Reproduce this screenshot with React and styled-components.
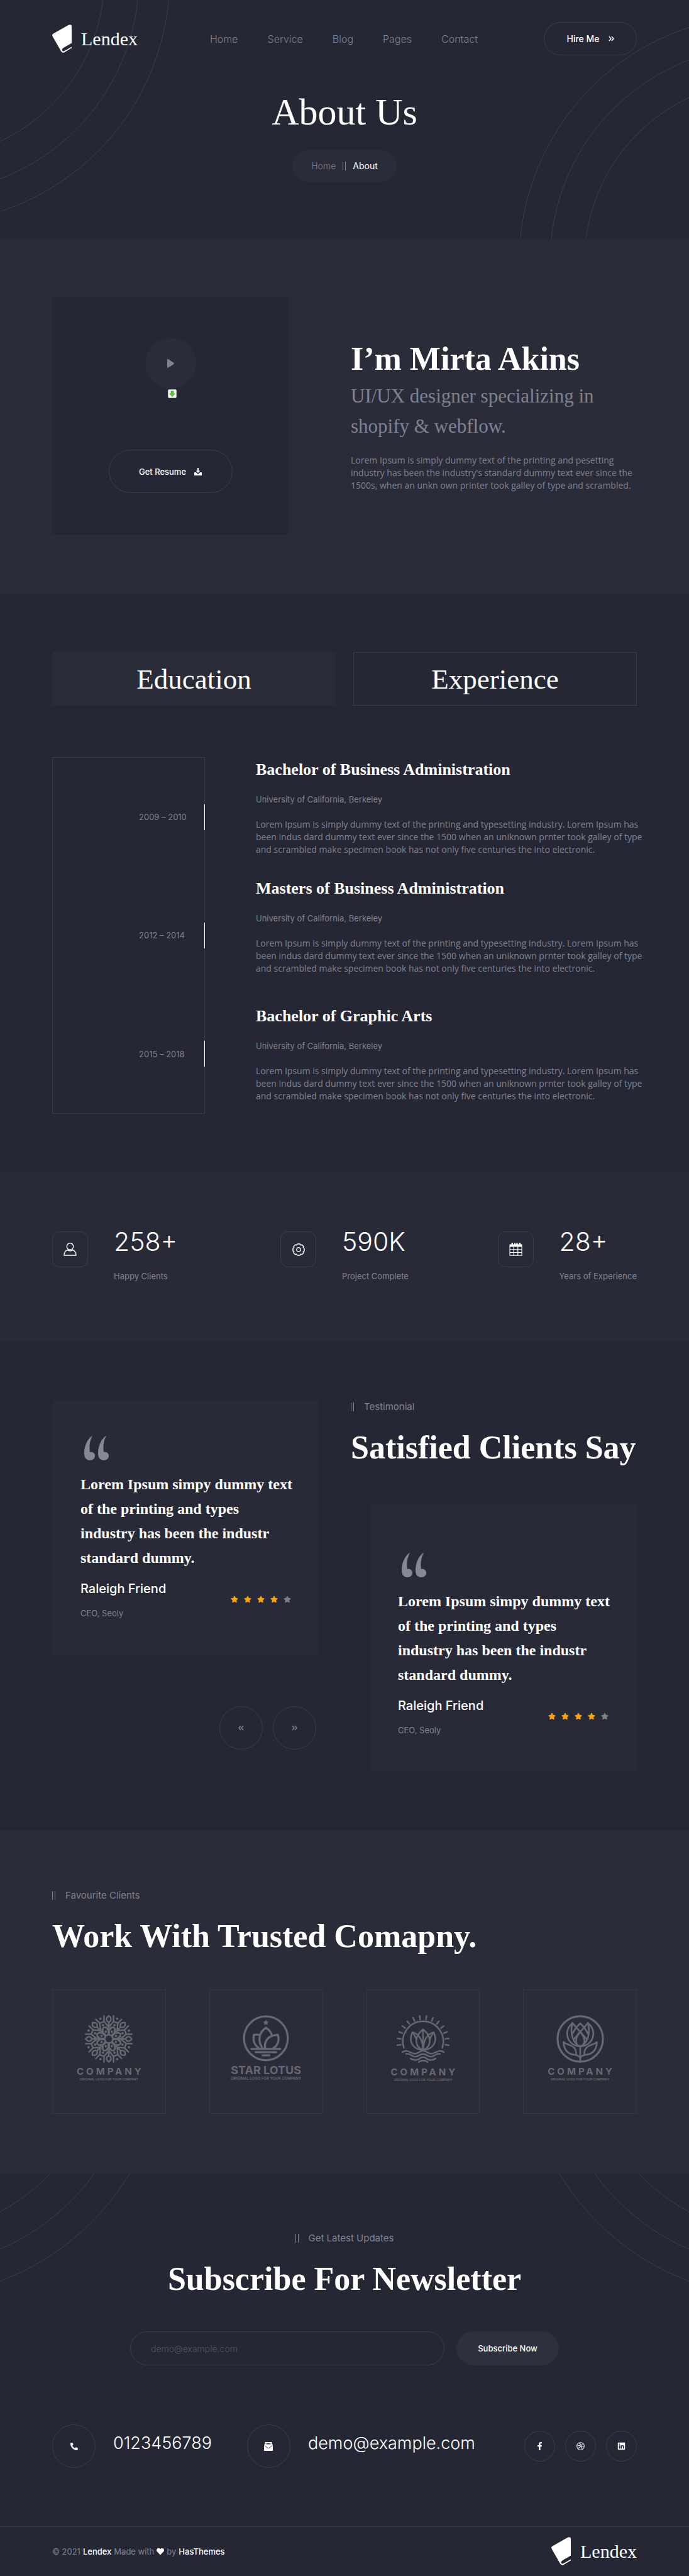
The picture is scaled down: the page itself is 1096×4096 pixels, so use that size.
import React from "react";
import styled, { createGlobalStyle, ThemeProvider } from "styled-components";
import { FaDribbble, FaFacebookF, FaHeart, FaLinkedin, FaPhoneAlt, FaStar } from "react-icons/fa";

const theme = {
  dark: "#252734",
  light: "#2a2c39",
  card: "#282a37",
  raised: "#2e303d",
  line: "#3a3c49",
  faint: "#343643",
  muted: "#808290",
  white: "#ffffff",
  serif: '"Liberation Serif", "Times New Roman", serif',
  sans: 'Inter, "Open Sans", sans-serif',
  copy: '"Open Sans", Inter, sans-serif',
};

const GlobalStyle = createGlobalStyle`
  *, *::before, *::after { box-sizing: border-box; }
  body { margin: 0; background: #252734; }
  h1, h2, h3, p, ol, ul, blockquote { margin: 0; padding: 0; font-weight: 400; }
  ol, ul { list-style: none; }
  a { color: inherit; text-decoration: none; }
  button, input { font: inherit; color: inherit; }
  svg { display: block; }
`;

const Page = styled.div`
  font-family: ${(p) => p.theme.sans};
  font-size: 13px;
  line-height: 20px;
  font-weight: 300;
  color: ${(p) => p.theme.muted};
  background: ${(p) => p.theme.dark};
  overflow: hidden;
`;

const Section = styled.section`
  position: relative;
  padding: ${(p) => p.$pad || "94px 83px"};
  background: ${(p) => p.theme[p.$tone || "dark"]};
`;

const Arcs = styled.svg`
  position: absolute;
  top: 0;
  ${(p) => (p.$right ? "right: 0;" : "left: 0;")}
  width: 280px;
  height: 380px;
  fill: none;
  stroke: ${(p) => p.theme.line};
  pointer-events: none;
`;

/* Header */

const TopBar = styled.div`
  position: relative;
  display: flex;
  align-items: center;
  justify-content: space-between;
  height: 53px;
`;

const Brand = styled.a`
  display: flex;
  align-items: center;
  gap: 15px;
  color: ${(p) => p.theme.white};
  font-family: ${(p) => p.theme.serif};
  font-size: 30px;
  line-height: 45px;
  font-weight: 400;
`;

const Nav = styled.nav`
  display: flex;
  gap: 47px;
  margin-right: -10px;
  font-size: 16px;
`;

const PillButton = styled.button`
  display: flex;
  align-items: center;
  justify-content: center;
  gap: ${(p) => p.$gap || "0"};
  width: ${(p) => p.$width};
  height: ${(p) => p.$height || "53px"};
  padding: 0;
  border: 1px solid ${(p) => (p.$filled ? p.theme.raised : p.theme.line)};
  border-radius: 35px;
  background: ${(p) => (p.$filled ? p.theme.raised : "transparent")};
  color: ${(p) => p.theme.white};
  font-size: ${(p) => p.$size || "13px"};
  font-weight: 500;
  cursor: pointer;
`;

const PageTitle = styled.h1`
  position: relative;
  margin-top: 54px;
  text-align: center;
  color: ${(p) => p.theme.white};
  font-family: ${(p) => p.theme.serif};
  font-size: 60px;
  line-height: 72px;
`;

const Crumbs = styled.nav`
  position: relative;
  display: flex;
  align-items: center;
  justify-content: center;
  gap: 11px;
  width: 166px;
  height: 52px;
  margin: 24px auto 0;
  border-radius: 26px;
  background: ${(p) => p.theme.light};
  font-size: 14px;

  [aria-current] {
    color: ${(p) => p.theme.white};
    font-weight: 400;
  }
`;

const Bars = styled.span`
  display: block;
  width: 5px;
  height: 14px;
  border: solid ${(p) => p.theme.muted};
  border-width: 0 1px;
`;

/* Shared headings */

const Kicker = styled.p`
  display: flex;
  align-items: center;
  justify-content: ${(p) => (p.$center ? "center" : "flex-start")};
  gap: 16px;
  font-size: 15px;
`;

const Heading = styled.h2`
  margin-top: ${(p) => (p.$flush ? "0" : "22px")};
  text-align: ${(p) => (p.$center ? "center" : "left")};
  white-space: nowrap;
  color: ${(p) => p.theme.white};
  font-family: ${(p) => p.theme.serif};
  font-size: 52px;
  line-height: 66px;
  font-weight: 700;
`;

/* About */

const AboutGrid = styled.div`
  display: grid;
  grid-template-columns: minmax(0, 376fr) minmax(0, 455fr);
  gap: 99px;
  align-items: center;
`;

const VideoCard = styled.div`
  display: flex;
  flex-direction: column;
  align-items: center;
  padding: 64px 0 66px;
  background: ${(p) => p.theme.dark};
`;

const PlayButton = styled.button`
  display: flex;
  align-items: center;
  justify-content: center;
  width: 81px;
  height: 81px;
  padding: 0;
  border: 0;
  border-radius: 50%;
  background: ${(p) => p.theme.light};
`;

const Badge = styled.div`
  margin: 1px 0 82px 5px;
`;

const Intro = styled.div`
  padding-bottom: 4px;
`;

const Role = styled.p`
  margin: 2px 0 20px;
  font-family: ${(p) => p.theme.serif};
  font-size: 31px;
  line-height: 48px;
  font-weight: 400;
`;

/* Education */

const Tabs = styled.div`
  display: grid;
  grid-template-columns: 1fr 1fr;
  gap: 28px;
`;

const Tab = styled.button`
  height: 85px;
  padding: 0;
  border: 1px solid ${(p) => (p.$active ? p.theme.light : p.theme.line)};
  background: ${(p) => (p.$active ? p.theme.light : "transparent")};
  color: ${(p) => p.theme.white};
  font-family: ${(p) => p.theme.serif};
  font-size: 45px;
  font-weight: 400;
`;

const History = styled.div`
  display: grid;
  grid-template-columns: minmax(0, 243fr) minmax(0, 606fr);
  gap: 81px;
  margin-top: 82px;
`;

const Years = styled.ol`
  display: grid;
  grid-template-rows: repeat(3, 1fr);
  height: 567px;
  border: 1px solid ${(p) => p.theme.line};
  border-right: 0;
`;

const Year = styled.li`
  display: flex;
  align-items: center;
  justify-content: space-between;
  padding-left: 137px;
  border-right: 1px solid ${(p) => p.theme.line};
  font-size: 13px;

  &::after {
    content: "";
    flex: none;
    width: 1px;
    height: 41px;
    margin-right: -1px;
    background: ${(p) => p.theme.white};
  }
`;

const Degrees = styled.div`
  display: flex;
  flex-direction: column;
  gap: 35px;
  padding-top: 3px;
`;

const Degree = styled.article`
  display: grid;
  gap: 20px;

  &:last-child {
    margin-top: 14px;
  }
`;

const DegreeTitle = styled.h3`
  color: ${(p) => p.theme.white};
  font-family: ${(p) => p.theme.serif};
  font-size: 26px;
  line-height: 34px;
  font-weight: 700;
`;

const Copy = styled.p`
  white-space: pre;
  font-family: ${(p) => p.theme.copy};
  font-size: 14px;
`;

/* Stats */

const StatsRow = styled.div`
  display: grid;
  grid-template-columns: repeat(3, 1fr);
`;

const Stat = styled.div`
  display: flex;
  gap: 41px;
  justify-self: ${(p) => p.$align};
  font-weight: 400;
`;

const StatIcon = styled.div`
  display: flex;
  align-items: center;
  justify-content: center;
  width: 57px;
  height: 57px;
  border: 1px solid ${(p) => p.theme.line};
  border-radius: 12px;
`;

const StatValue = styled.p`
  margin-bottom: 29px;
  color: ${(p) => p.theme.white};
  font-size: 41px;
  line-height: 32px;
  font-weight: 300;
`;

/* Testimonials */

const QuoteGrid = styled.div`
  display: grid;
  grid-template-columns: minmax(0, 425fr) minmax(0, 455fr);
  gap: 50px;
`;

const QuoteCard = styled.article`
  margin: ${(p) => (p.$shifted ? "57px 0 0 30px" : "0")};
  padding: ${(p) => (p.$shifted ? "77px" : "56px")} 45px 56px;
  background: ${(p) => p.theme.card};
`;

const QuoteText = styled.blockquote`
  margin: 19px 0 14px;
  white-space: pre;
  color: ${(p) => p.theme.white};
  font-family: ${(p) => p.theme.serif};
  font-size: 24px;
  line-height: 39px;
  font-weight: 700;
`;

const Person = styled.div`
  display: flex;
  align-items: center;
  justify-content: space-between;
`;

const PersonName = styled.h3`
  margin-bottom: 14px;
  color: ${(p) => p.theme.white};
  font-size: 20px;
  line-height: 30px;
  font-weight: 500;
`;

const Stars = styled.div`
  display: flex;
  gap: 9px;
  color: #fea303;

  svg:last-child {
    color: #808080;
  }
`;

const Arrows = styled.div`
  display: flex;
  justify-content: flex-end;
  gap: 16px;
  margin: 82px 5px 0 0;
`;

const Round = styled.span`
  display: flex;
  flex: none;
  align-items: center;
  justify-content: center;
  width: ${(p) => p.$size || "69px"};
  height: ${(p) => p.$size || "69px"};
  padding: 0;
  border: 1px solid ${(p) => p.theme.line};
  border-radius: 50%;
  background: transparent;
  color: ${(p) => p.theme[p.$ink || "white"]};
`;

/* Clients */

const LogoRow = styled.div`
  display: grid;
  grid-template-columns: repeat(4, 1fr);
  gap: 69px;
  margin-top: 51px;
`;

const LogoBox = styled.figure`
  display: flex;
  flex-direction: column;
  align-items: center;
  height: 198px;
  margin: 0;
  padding-top: 40px;
  border: 1px solid ${(p) => p.theme.faint};
  color: #676872;
  font-weight: 700;
  white-space: nowrap;
`;

const LogoName = styled.figcaption`
  margin-top: 5px;
  text-indent: ${(p) => (p.$wide ? "0" : "4px")};
  letter-spacing: ${(p) => (p.$wide ? "0" : "4px")};
  font-size: ${(p) => (p.$wide ? "18px" : "15px")};
  line-height: 18px;
`;

const LogoTagline = styled.p`
  font-size: ${(p) => (p.$wide ? "6px" : "5px")};
  line-height: 7px;
  font-weight: 600;
`;

/* Newsletter and footer */

const Form = styled.form`
  display: flex;
  justify-content: center;
  gap: 19px;
  margin-top: 50px;
`;

const EmailInput = styled.input`
  width: 500px;
  height: 54px;
  padding: 0 32px;
  border: 1px solid ${(p) => p.theme.line};
  border-radius: 27px;
  outline: 0;
  background: transparent;
  font-size: 14px;

  &::placeholder {
    color: #555763;
    opacity: 1;
  }
`;

const ContactRow = styled.div`
  display: flex;
  align-items: center;
  justify-content: space-between;
  margin-top: 94px;
`;

const Contacts = styled.address`
  display: flex;
  gap: 56px;
  font-style: normal;
`;

const Contact = styled.a`
  display: flex;
  align-items: center;
  gap: 28px;
  color: ${(p) => p.theme.white};
  font-size: 27px;
  line-height: 32px;
  font-weight: 300;

  > span:last-child {
    margin-bottom: 9px;
  }
`;

const Socials = styled.div`
  display: flex;
  gap: 16px;
`;

const Footer = styled.footer`
  display: flex;
  align-items: center;
  justify-content: space-between;
  height: 78px;
  padding: 0 83px;
  border-top: 1px solid ${(p) => p.theme.line};
`;

const Credit = styled.p`
  display: flex;
  align-items: center;
  gap: 4px;
  font-size: 13px;

  b {
    color: ${(p) => p.theme.white};
    font-weight: 500;
  }

  svg {
    color: ${(p) => p.theme.white};
  }
`;

/* Drawings */

const BrandMark = () => (
  <svg width="31" height="45" viewBox="35 53 115 166" fill="currentColor" aria-hidden="true">
    <path d="M40 107 130 56Q150 48 150 66V162L102 190Q90 198 94 206 98 214 107 208L150 184V191L110 215Q96 223 88 211L37 122Q32 112 40 107Z" />
  </svg>
);

const Chevrons = ({ left, size = 9 }) => (
  <svg
    width={size}
    height={size}
    viewBox="0 0 10 10"
    fill="none"
    stroke="currentColor"
    strokeWidth="1.7"
    aria-hidden="true"
  >
    <path d={left ? "M4.5 1 1.2 5l3.3 4M9 1 5.7 5 9 9" : "M1 1l3.3 4L1 9M5.5 1l3.3 4-3.3 4"} />
  </svg>
);

const PlayIcon = () => (
  <svg width="11" height="14" viewBox="0 0 11 14" fill="#808290" aria-hidden="true">
    <path d="M0 1.2C0 .2 1-.3 1.900.3l7.900 5.200c1.400.9 1.400 2 0 2.900l-7.900 5.200C1 14.300 0 13.800 0 12.800Z" />
  </svg>
);

const GreenArrowIcon = () => (
  <svg width="14" height="14" viewBox="0 0 14 14" aria-hidden="true">
    <rect x=".5" y=".5" width="13" height="13" rx="1.5" fill="#f4f4f2" stroke="#bdbdbd" />
    <path d="M5 3h4v4h2.200L7 11.600 2.800 7H5Z" fill="#62c62e" stroke="#3f9a1c" strokeWidth=".7" />
  </svg>
);

const DownloadIcon = () => (
  <svg width="12" height="12" viewBox="0 0 12 12" fill="currentColor" aria-hidden="true">
    <path d="M5 0h2v4.500h2.300L6 8 2.700 4.500H5Z" />
    <path d="M0 7h2.600L6 10l3.400-3H12v5H0Z" />
  </svg>
);

const UserIcon = () => (
  <svg width="21" height="21" viewBox="0 0 21 21" fill="none" stroke="#fff" strokeWidth="1.400" aria-hidden="true">
    <circle cx="10.500" cy="6" r="5.200" />
    <path d="M6.200 11.400C3 13.200 1 16 1 20h19c0-4-2-6.800-5.200-8.600-2.400 2.100-6.200 2.100-8.600 0Z" />
  </svg>
);

const GearIcon = () => (
  <svg width="20" height="20" viewBox="-10.500 -10.500 21 21" fill="none" stroke="#fff" strokeWidth="1.500" aria-hidden="true">
    <circle r="3.400" />
    <path
      strokeLinejoin="round"
      d="M-2.500-9.400h5l.9 2 2.100-.8 2.900 2.900-.8 2 1.800.9v4.800l-1.800.9.8 2-2.900 2.900-2.100-.8-.9 2h-5l-.9-2-2.100.8-2.900-2.900.8-2-1.800-.9v-4.800l1.800-.9-.8-2 2.900-2.900 2.100.8Z"
    />
  </svg>
);

const CalendarIcon = () => (
  <svg width="21" height="21" viewBox="0 0 21 21" fill="#fff" aria-hidden="true">
    <path d="M.5 2.500h3V0h2.500v2.500h2V0h2v2.500h1.500V0h2v2.500h2V0H18v2.500h2.500v4H.5Z" />
    <path d="M1 6v14.300h19V6M7.200 6v14M13.800 6v14M1 10.800h19M1 15.500h19" fill="none" stroke="#fff" strokeWidth="1.100" />
  </svg>
);

const QuoteIcon = () => (
  <svg width="45" height="39" viewBox="-6 0 45 39" fill="#868893" aria-hidden="true">
    <path d="M12.500 0C4 6.500 0 17 0 28c0 7 3.500 11 9 11 5 0 8-3 8-7 0-4.500-3.500-7-8-6C7.500 16 9 7.500 12.800.5Z" />
    <path d="M34.500 0C26 6.500 22 17 22 28c0 7 3.500 11 9 11 5 0 8-3 8-7 0-4.500-3.500-7-8-6-1.500-10 0-18.500 3.800-25.500Z" />
  </svg>
);

const MailIcon = () => (
  <svg width="14" height="14" viewBox="0 0 14 14" aria-hidden="true">
    <path d="M0 4.500 1.500 3V0h11v3L14 4.500V14H0Z" fill="#fff" />
    <path d="M3.500 2.500h7M3.500 4.500h7M.5 5.500 7 10l6.500-4.500" fill="none" stroke="#252734" strokeWidth=".8" />
  </svg>
);

const MandalaLogo = () => (
  <svg width="76" height="76" viewBox="-141 -141 282 282" fill="none" stroke="currentColor" strokeWidth="9" strokeLinecap="round" strokeLinejoin="round" aria-hidden="true">
    <circle r="24" />
    {[0, 45, 90, 135, 180, 225, 270, 315].map((a) => (
      <g key={a} transform={`rotate(${a})`}>
        <path d="M0-26V-98M0-136C-18-122-18-110 0-98 18-110 18-122 0-136ZM-28-136V-103L0-70 28-103V-136M28-103 53-93M0-50-16-66M0-50 16-66" />
        <g transform="rotate(22.5)">
          <path d="M-7-26-17-44-14-67 0-75 14-67 17-44 7-26" />
          <g fill="currentColor" stroke="none">
            <circle cy="-46" r="7" />
            <circle cy="-88" r="7" />
            <circle cy="-129" r="7" />
          </g>
        </g>
      </g>
    ))}
  </svg>
);

const StarLotusLogo = () => (
  <svg width="74" height="74" viewBox="-136 -136 272 272" fill="none" stroke="currentColor" strokeWidth="12" strokeLinecap="round" strokeLinejoin="round" aria-hidden="true">
    <circle r="128" />
    <path stroke="none" fill="currentColor" d="M0-110 5-98 17-97 8-88 11-76 0-83-11-76-8-88-17-97-5-98Z" />
    <path d="M-20 56C-48 20-44-32 0-62 18-50 30-36 35-18M-38-20C-50-22-62-22-70-20-78 10-66 42-42 56M-5 56C-10 14 16-20 70-20 80 14 68 42 46 56" />
    <path d="M-84 62H84M-60 81H60M-20 100H20" />
  </svg>
);

const Rays = () =>
  [-6, -5, -4, -3, -2, -1, 0, 1, 2, 3, 4, 5, 6, 7].map((i) => (
    <path key={i} d="M0-132V-153" transform={`rotate(${i * 15 - 7.5})`} />
  ));

const SunLotusLogo = () => (
  <svg width="86" height="77" viewBox="-159 -157 318 284" fill="none" stroke="currentColor" strokeWidth="9" strokeLinecap="round" strokeLinejoin="round" aria-hidden="true">
    <path d="M-113 36A119 119 0 1 1 113 36" />
    <Rays />
    <path d="M0-73V50M0-73C-54-30-52 26 0 50 52 26 54-30 0-73Z" />
    <path d="M-62-56C-86-8-68 42 0 50 68 42 86-8 62-56M-62-56C-22-46-2-10 0 50 2-10 22-46 62-56M-62-56C-52-42-44-30-39-12M62-56C52-42 44-30 39-12" />
    <path d="M-122 61C-90 40-74 70-48 70-24 70-22 53 0 53 22 53 24 70 48 70 74 70 90 40 122 61M-100 71C-72 66-68 88-48 88-24 88-22 72 0 72 22 72 24 88 48 88 68 88 72 66 100 71M-74 98C-62 108-34 112-20 98-8 88 8 88 20 98 34 112 62 108 74 98M-26 119C-12 108 12 108 26 119" />
  </svg>
);

const TulipLogo = () => (
  <svg width="76" height="76" viewBox="-141 -141 282 282" fill="none" stroke="currentColor" strokeWidth="10" strokeLinecap="round" strokeLinejoin="round" aria-hidden="true">
    <circle r="134" strokeWidth="12" />
    <path d="M0 44V134M0-42C-32-4-34 40 0 42 34 40 32-4 0-42Z" />
    <path d="M0 44C-74 42-106-44-46-94L-24-68 0-92 24-68 46-94C106-44 74 42 0 44" />
    <path d="M-24-68 0-42 24-68M-24-68-46-30M24-68 46-30M0-42-40 4M0-42 40 4M-46-94C-60-40-48 12-14 38M46-94C60-40 48 12 14 38" />
    <path d="M-98 18C-96 76-60 92-28 94-6 98 0 110 0 116 0 110 6 98 28 94 60 92 96 76 98 18 74 42 24 32 24 88M-98 18C-74 42-24 32-24 88" />
  </svg>
);

const HeaderArcs = ({ right }) => (
  <Arcs $right={right} viewBox={right ? "816 0 280 380" : "0 0 280 380"} aria-hidden="true">
    {[288, 343, 392].map((r) => (
      <circle key={r} cx={right ? 1218 : -122} cy={right ? 416 : -36} r={r} />
    ))}
  </Arcs>
);

const NewsArcs = ({ right }) => (
  <Arcs $right={right} viewBox="0 0 280 380" aria-hidden="true">
    {[307, 361, 408].map((r) => (
      <circle key={r} cx={right ? 423 : -143} cy="-210" r={r} />
    ))}
  </Arcs>
);

/* Content */

const links = ["Home", "Service", "Blog", "Pages", "Contact"];

const degreeCopy =
  "Lorem Ipsum is simply dummy text of the printing and typesetting industry. Lorem Ipsum has\nbeen indus dard dummy text ever since the 1500 when an uniknown prnter took galley of type\nand scrambled make specimen book has not only five centuries the into electronic.";

const degrees = [
  { years: "2009 – 2010", title: "Bachelor of Business Administration" },
  { years: "2012 – 2014", title: "Masters of Business Administration" },
  { years: "2015 – 2018", title: "Bachelor of Graphic Arts" },
];

const stats = [
  { value: "258+", label: "Happy Clients", Icon: UserIcon, align: "start" },
  { value: "590K", label: "Project Complete", Icon: GearIcon, align: "center" },
  { value: "28+", label: "Years of Experience", Icon: CalendarIcon, align: "end" },
];

const clients = [
  { id: "mandala", name: "COMPANY", Logo: MandalaLogo },
  { id: "star", name: "STAR LOTUS", Logo: StarLotusLogo, wide: true },
  { id: "sun", name: "COMPANY", Logo: SunLotusLogo },
  { id: "tulip", name: "COMPANY", Logo: TulipLogo },
];

const socials = [
  { name: "Facebook", Icon: FaFacebookF },
  { name: "Dribbble", Icon: FaDribbble },
  { name: "LinkedIn", Icon: FaLinkedin },
];

const Logo = () => (
  <Brand href="#">
    <BrandMark />
    Lendex
  </Brand>
);

const Testimonial = ({ shifted }) => (
  <QuoteCard $shifted={shifted}>
    <QuoteIcon />
    <QuoteText>
      {"Lorem Ipsum simpy dummy text\nof the printing and types\nindustry has been the industr\nstandard dummy."}
    </QuoteText>
    <Person>
      <div>
        <PersonName>Raleigh Friend</PersonName>
        <p>CEO, Seoly</p>
      </div>
      <Stars role="img" aria-label="4 out of 5 stars">
        {[1, 2, 3, 4, 5].map((n) => (
          <FaStar key={n} size={12} />
        ))}
      </Stars>
    </Person>
  </QuoteCard>
);

export default function App() {
  return (
    <ThemeProvider theme={theme}>
      <GlobalStyle />
      <Page>
        <Section as="header" $pad="35px 83px 90px">
          <HeaderArcs />
          <HeaderArcs right />
          <TopBar>
            <Logo />
            <Nav>
              {links.map((l) => (
                <a key={l} href="#">
                  {l}
                </a>
              ))}
            </Nav>
            <PillButton $width="148px" $gap="14px" $size="14px">
              Hire Me <Chevrons />
            </PillButton>
          </TopBar>
          <PageTitle>About Us</PageTitle>
          <Crumbs aria-label="Breadcrumb">
            <a href="#">Home</a>
            <Bars />
            <span aria-current="page">About</span>
          </Crumbs>
        </Section>

        <Section $tone="light" $pad="93px 83px 94px">
          <AboutGrid>
            <VideoCard>
              <PlayButton aria-label="Play video">
                <PlayIcon />
              </PlayButton>
              <Badge>
                <GreenArrowIcon />
              </Badge>
              <PillButton $width="197px" $height="69px" $gap="13px">
                Get Resume <DownloadIcon />
              </PillButton>
            </VideoCard>
            <Intro>
              <Heading $flush>I’m Mirta Akins</Heading>
              <Role>
                UI/UX designer specializing in
                <br />
                shopify &amp; webflow.
              </Role>
              <Copy>
                {
                  "Lorem Ipsum is simply dummy text of the printing and pesetting\nindustry has been the industry's standard dummy text ever since the\n1500s, when an unkn own printer took galley of type and scrambled."
                }
              </Copy>
            </Intro>
          </AboutGrid>
        </Section>

        <Section $pad="93px 83px 93px">
          <Tabs role="tablist">
            <Tab role="tab" aria-selected="true" $active>
              Education
            </Tab>
            <Tab role="tab" aria-selected="false">
              Experience
            </Tab>
          </Tabs>
          <History>
            <Years>
              {degrees.map((d) => (
                <Year key={d.years}>{d.years}</Year>
              ))}
            </Years>
            <Degrees>
              {degrees.map((d) => (
                <Degree key={d.title}>
                  <DegreeTitle>{d.title}</DegreeTitle>
                  <p>University of California, Berkeley</p>
                  <Copy>{degreeCopy}</Copy>
                </Degree>
              ))}
            </Degrees>
          </History>
        </Section>

        <Section $tone="card">
          <StatsRow>
            {stats.map(({ value, label, Icon, align }) => (
              <Stat key={label} $align={align}>
                <StatIcon>
                  <Icon />
                </StatIcon>
                <div>
                  <StatValue>{value}</StatValue>
                  <p>{label}</p>
                </div>
              </Stat>
            ))}
          </StatsRow>
        </Section>

        <Section $pad="94px 83px 93px">
          <QuoteGrid>
            <div>
              <Testimonial />
              <Arrows>
                <Round as="button" $ink="muted" aria-label="Previous">
                  <Chevrons left />
                </Round>
                <Round as="button" $ink="muted" aria-label="Next">
                  <Chevrons />
                </Round>
              </Arrows>
            </div>
            <div>
              <Kicker>
                <Bars />
                Testimonial
              </Kicker>
              <Heading>Satisfied Clients Say</Heading>
              <Testimonial shifted />
            </div>
          </QuoteGrid>
        </Section>

        <Section $tone="light">
          <Kicker>
            <Bars />
            Favourite Clients
          </Kicker>
          <Heading>Work With Trusted Comapny.</Heading>
          <LogoRow>
            {clients.map(({ id, name, Logo: Mark, wide }) => (
              <LogoBox key={id}>
                <Mark />
                <LogoName $wide={wide}>{name}</LogoName>
                <LogoTagline $wide={wide}>ORIGINAL LOGO FOR YOUR COMPANY</LogoTagline>
              </LogoBox>
            ))}
          </LogoRow>
        </Section>

        <Section $pad="94px 83px 93px">
          <NewsArcs />
          <NewsArcs right />
          <Kicker $center>
            <Bars />
            Get Latest Updates
          </Kicker>
          <Heading $center>Subscribe For Newsletter</Heading>
          <Form onSubmit={(e) => e.preventDefault()}>
            <EmailInput type="email" aria-label="Email address" placeholder="demo@example.com" />
            <PillButton type="submit" $width="163px" $height="54px" $filled>
              Subscribe Now
            </PillButton>
          </Form>
          <ContactRow>
            <Contacts>
              <Contact href="#">
                <Round>
                  <FaPhoneAlt size={12} />
                </Round>
                <span>0123456789</span>
              </Contact>
              <Contact href="#">
                <Round>
                  <MailIcon />
                </Round>
                <span>demo@example.com</span>
              </Contact>
            </Contacts>
            <Socials>
              {socials.map(({ name, Icon }) => (
                <Round key={name} as="a" href="#" $size="49px" aria-label={name}>
                  <Icon size={13} />
                </Round>
              ))}
            </Socials>
          </ContactRow>
        </Section>

        <Footer>
          <Credit>
            © 2021 <b>Lendex</b> Made with <FaHeart size={12} /> by <b>HasThemes</b>
          </Credit>
          <Logo />
        </Footer>
      </Page>
    </ThemeProvider>
  );
}
